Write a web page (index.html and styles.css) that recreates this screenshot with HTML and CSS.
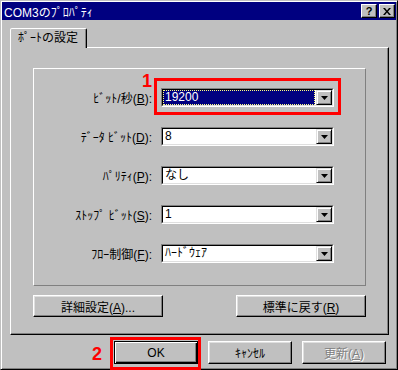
FILE: index.html
```html
<!DOCTYPE html>
<html>
<head>
    <title>COM3のﾌﾟﾛﾊﾟﾃｨ</title>
    <meta charset="UTF-8">
    <link rel="stylesheet" href="styles.css">
</head>
<body>
    <div class="window">
        <header class="titlebar">
            <span class="title">COM3のﾌﾟﾛﾊﾟﾃｨ</span>
            <div class="title-buttons">
                <span class="tbtn tbtn-help">?</span>
                <span class="tbtn">
                    <svg width="8" height="7" viewBox="0 0 8 7"><path d="M0 0h2l2 2.5L6 0h2L5 3.5 8 7H6L4 4.5 2 7H0l3-3.5z" fill="#000"/></svg>
                </span>
            </div>
        </header>

        <div class="tabs">
            <div class="tab">ﾎﾟｰﾄの設定</div>
        </div>

        <section class="panel">
            <div class="group">
                <div class="row">
                    <label>ﾋﾞｯﾄ/秒(<u>B</u>):</label>
                    <div class="combo"><div class="combo-inner">
                        <span class="value selected">19200</span>
                        <span class="drop"><svg width="7" height="4" viewBox="0 0 7 4"><path d="M0 0h7L3.5 4z" fill="#000"/></svg></span>
                    </div></div>
                </div>
                <div class="row">
                    <label>ﾃﾞｰﾀ ﾋﾞｯﾄ(<u>D</u>):</label>
                    <div class="combo"><div class="combo-inner">
                        <span class="value">8</span>
                        <span class="drop"><svg width="7" height="4" viewBox="0 0 7 4"><path d="M0 0h7L3.5 4z" fill="#000"/></svg></span>
                    </div></div>
                </div>
                <div class="row">
                    <label>ﾊﾟﾘﾃｨ(<u>P</u>):</label>
                    <div class="combo"><div class="combo-inner">
                        <span class="value">なし</span>
                        <span class="drop"><svg width="7" height="4" viewBox="0 0 7 4"><path d="M0 0h7L3.5 4z" fill="#000"/></svg></span>
                    </div></div>
                </div>
                <div class="row">
                    <label>ｽﾄｯﾌﾟ ﾋﾞｯﾄ(<u>S</u>):</label>
                    <div class="combo"><div class="combo-inner">
                        <span class="value">1</span>
                        <span class="drop"><svg width="7" height="4" viewBox="0 0 7 4"><path d="M0 0h7L3.5 4z" fill="#000"/></svg></span>
                    </div></div>
                </div>
                <div class="row">
                    <label>ﾌﾛｰ制御(<u>F</u>):</label>
                    <div class="combo"><div class="combo-inner">
                        <span class="value">ﾊｰﾄﾞｳｪｱ</span>
                        <span class="drop"><svg width="7" height="4" viewBox="0 0 7 4"><path d="M0 0h7L3.5 4z" fill="#000"/></svg></span>
                    </div></div>
                </div>
            </div>

            <div class="panel-buttons">
                <button class="button wide">詳細設定(<u>A</u>)...</button>
                <button class="button wide">標準に戻す(<u>R</u>)</button>
            </div>
        </section>

        <div class="dialog-buttons">
            <button class="button default">OK</button>
            <button class="button">ｷｬﾝｾﾙ</button>
            <button class="button disabled">更新(<u>A</u>)</button>
        </div>

        <!-- annotations -->
        <span class="mark mark-1">1</span>
        <span class="mark mark-2">2</span>
        <div class="callout callout-1"></div>
        <div class="callout callout-2"></div>
    </div>
</body>
</html>
```

FILE: styles.css
```css
/* Win95 style property dialog */
:root {
    --face: #c0c0c0;
    --shadow: #808080;
    --light: #dfdfdf;
    --title: #000080;
    --mark: #ff0000;
}

* { margin: 0; padding: 0; box-sizing: border-box; }

body {
    font: 12px "Liberation Sans", "Noto Sans CJK JP", sans-serif;
    color: #000;
    background: var(--face);
}

.window {
    position: relative;
    width: 398px;
    height: 370px;
    padding: 1px;
    background: var(--face);
    border: 1px solid;
    border-color: var(--face) #000 #000 var(--face);
    box-shadow: inset 1px 1px #fff, inset -1px -1px var(--shadow);
}

.titlebar {
    height: 18px;
    background: var(--title);
    color: #fff;
    display: flex;
    align-items: center;
    justify-content: space-between;
    padding: 0 1px 0 2px;
}

.title-buttons {
    display: flex;
    gap: 2px;
}

.tbtn {
    width: 16px;
    height: 14px;
    display: flex;
    align-items: center;
    justify-content: center;
    background: var(--face);
    color: #000;
    border: 1px solid;
    border-color: #fff #000 #000 #fff;
    box-shadow: inset -1px -1px var(--shadow);
}

.tbtn-help {
    font-weight: bold;
    font-size: 11px;
    line-height: 1;
}

.tabs {
    display: flex;
    margin: 8px 0 0 8px;
}

.tab {
    position: relative;
    z-index: 1;
    width: 77px;
    height: 20px;
    margin-bottom: -1px;
    padding: 1px 0 0 7px;
    background: var(--face);
    border: 1px solid;
    border-bottom: none;
    border-color: #fff #000 transparent #fff;
    border-radius: 2px 2px 0 0;
    box-shadow: inset -1px 0 var(--shadow);
    line-height: 16px;
}

.panel {
    width: 379px;
    height: 288px;
    margin-left: 8px;
    padding: 20px 0 0 22px;
    border: 1px solid;
    border-color: #fff #000 #000 #fff;
    box-shadow: inset -1px -1px var(--shadow);
}

.group {
    width: 333px;
    height: 218px;
    padding-top: 19px;
    display: flex;
    flex-direction: column;
    gap: 20px;
    border: 1px solid;
    border-color: #fff var(--shadow) var(--shadow) #fff;
}

.row {
    display: flex;
    align-items: center;
    gap: 9px;
    height: 19px;
}

.row label {
    width: 118px;
    text-align: right;
}

.combo {
    width: 173px;
    height: 19px;
    border: 1px solid;
    border-color: var(--shadow) #fff #fff var(--shadow);
}

.combo-inner {
    height: 17px;
    display: flex;
    background: #fff;
    border: 1px solid;
    border-color: #000 var(--light) var(--light) #000;
}

.value {
    flex: 1;
    padding-left: 2px;
    line-height: 15px;
}

.value.selected {
    margin: 0 1px 0 0;
    background: var(--title);
    color: #fff;
    outline: 1px dotted #ffff80;
    outline-offset: -1px;
    padding-left: 2px;
}

.drop {
    width: 16px;
    height: 15px;
    display: flex;
    align-items: center;
    justify-content: center;
    background: var(--face);
    border: 1px solid;
    border-color: var(--light) #000 #000 var(--light);
    box-shadow: inset 1px 1px #fff, inset -1px -1px var(--shadow);
}

.panel-buttons {
    width: 333px;
    margin-top: 9px;
    display: flex;
    justify-content: space-between;
}

.button {
    font: inherit;
    color: #000;
    background: var(--face);
    width: 84px;
    height: 23px;
    border: 1px solid;
    border-color: #fff #000 #000 #fff;
    box-shadow: inset -1px -1px var(--shadow), inset 1px 1px var(--light);
}

.button.wide {
    width: 130px;
    height: 22px;
}

.button.default {
    border-color: #000;
    box-shadow: inset 1px 1px #fff, inset -1px -1px #000, inset -2px -2px var(--shadow);
}

.button.disabled {
    color: var(--shadow);
    text-shadow: 1px 1px #fff;
}

.dialog-buttons {
    display: flex;
    justify-content: flex-end;
    gap: 10px;
    margin-top: 6px;
    padding-right: 10px;
}

/* red annotations over the dialog */
.mark {
    position: absolute;
    font: bold 18px/18px "Liberation Sans", sans-serif;
    color: var(--mark);
}

.mark-1 { left: 141px; top: 71px; }
.mark-2 { left: 91px; top: 344px; }

.callout {
    position: absolute;
    border: 3px solid var(--mark);
}

.callout-1 { left: 153px; top: 77px; width: 187px; height: 37px; }
.callout-2 { left: 109px; top: 336px; width: 91px; height: 33px; }
```
